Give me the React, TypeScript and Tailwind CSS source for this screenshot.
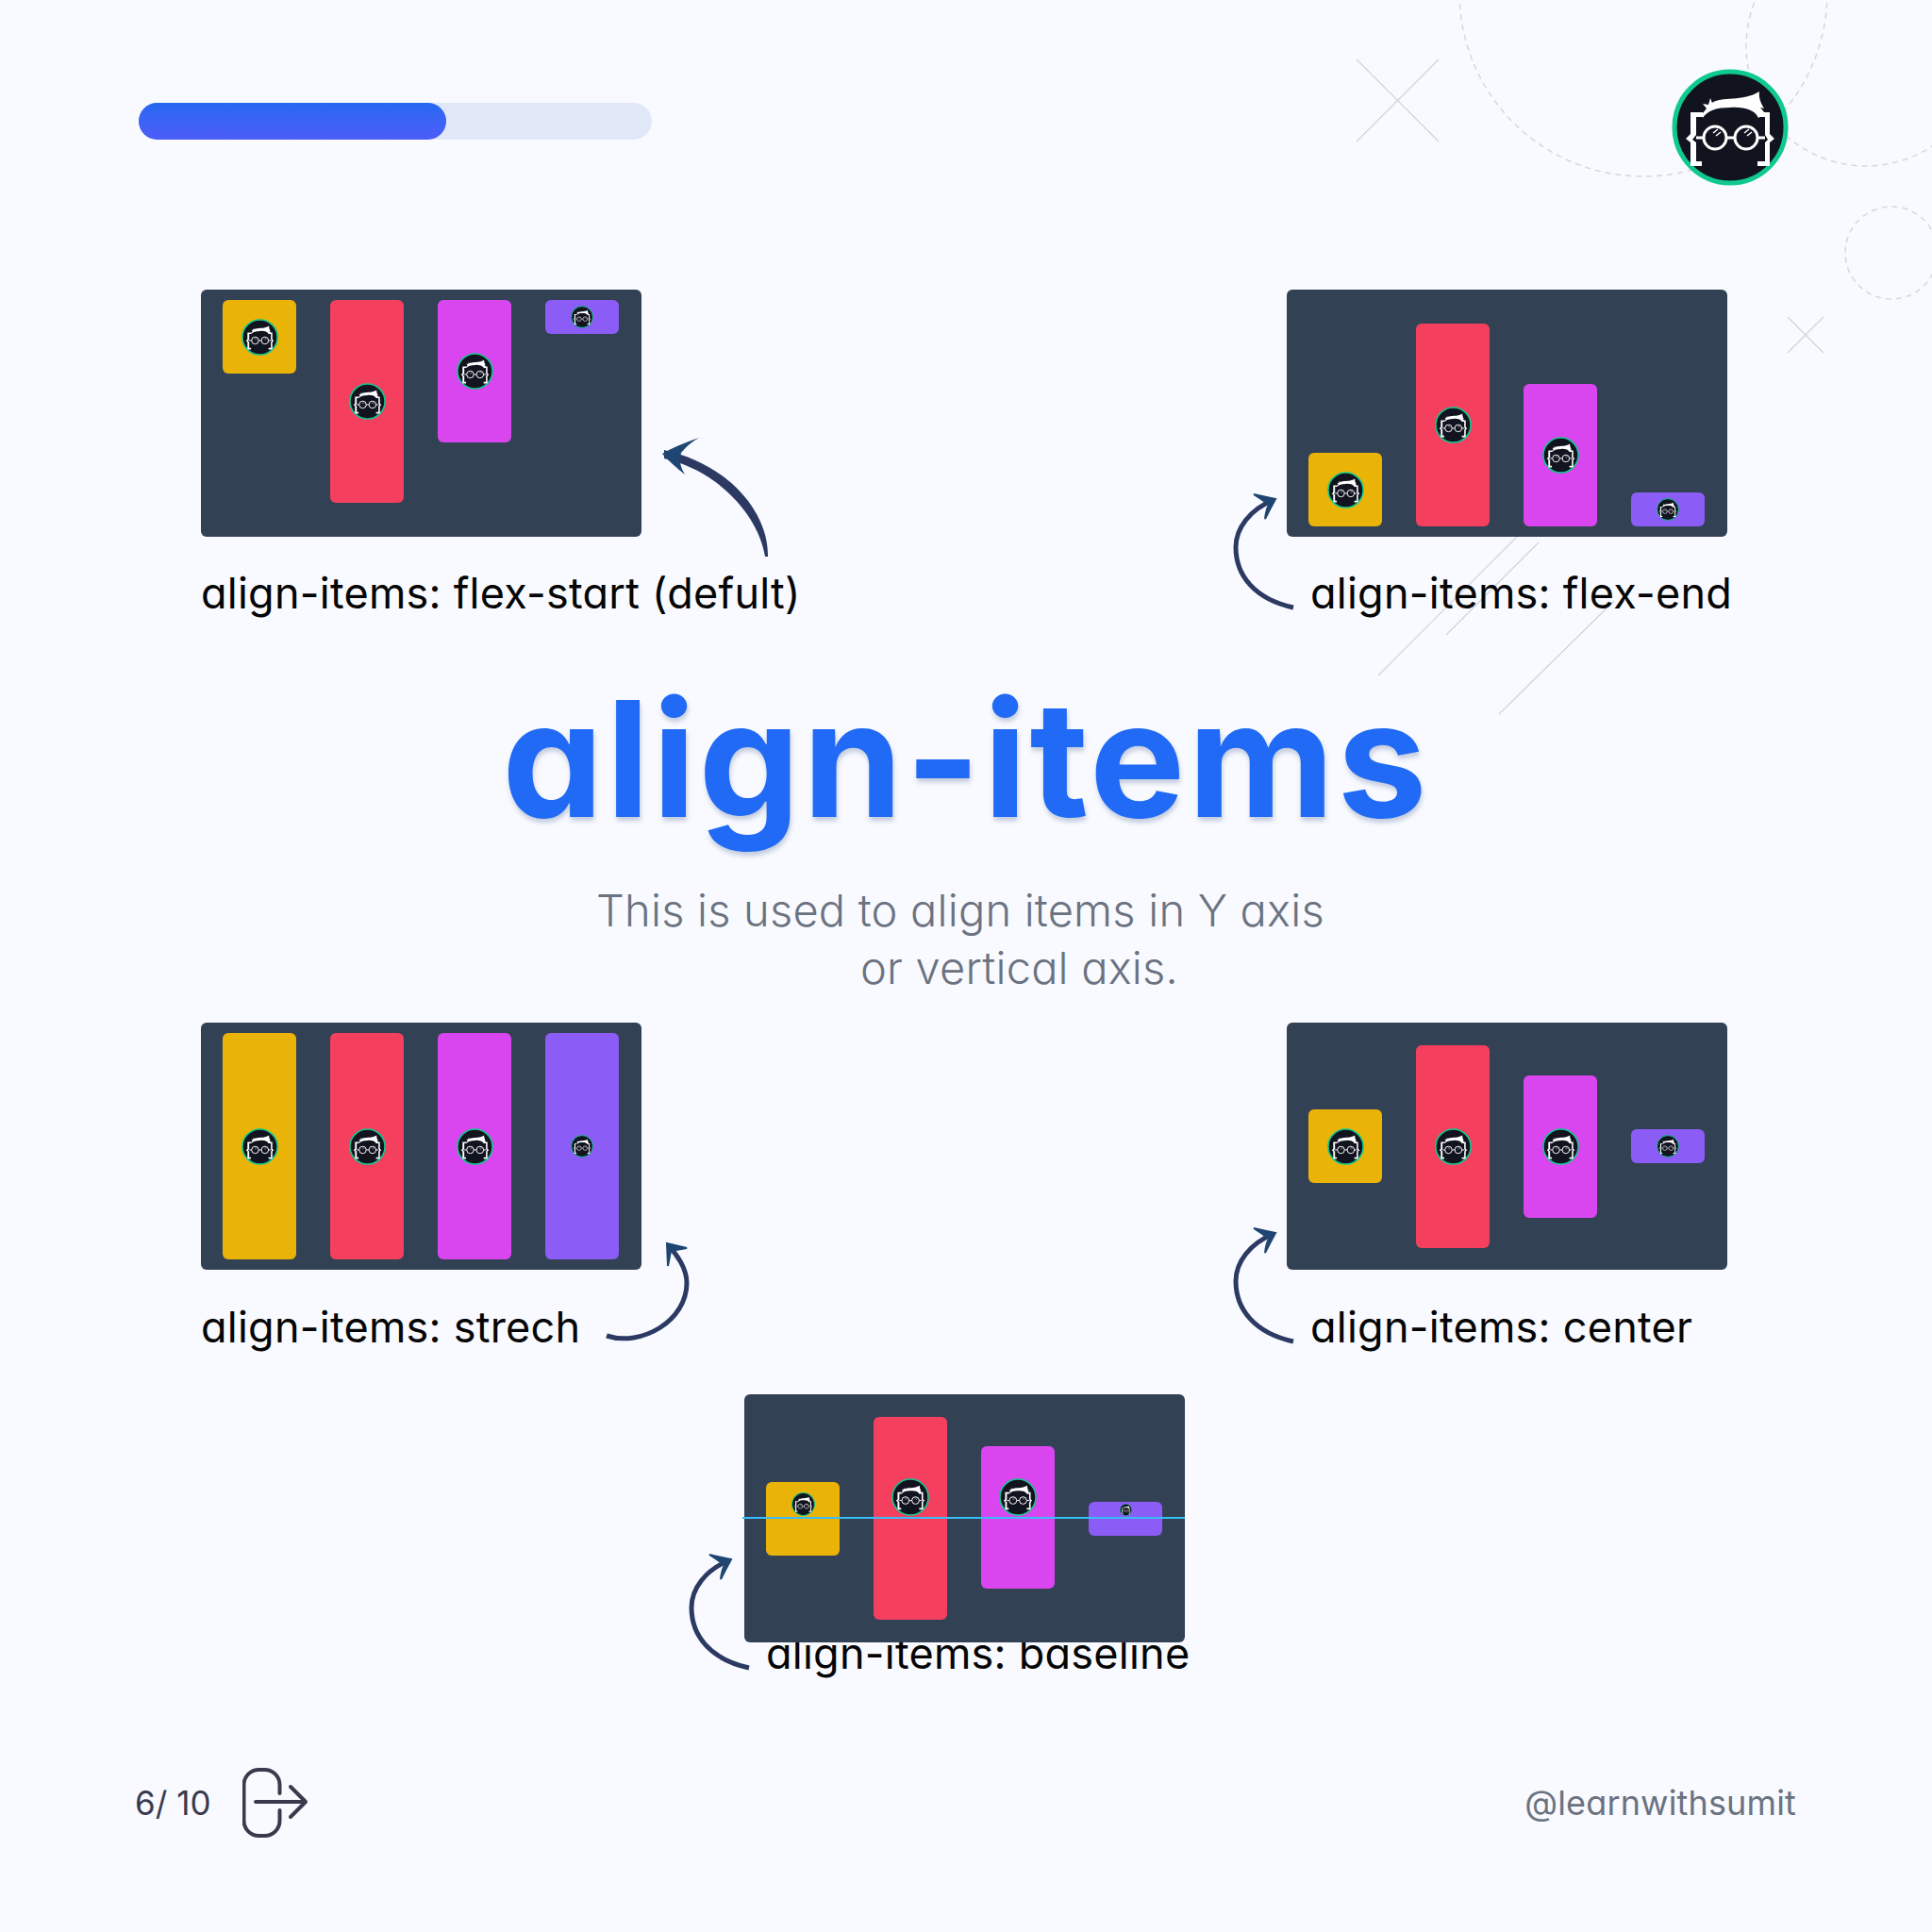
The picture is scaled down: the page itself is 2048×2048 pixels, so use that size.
const BARS = [
  { color: "bg-[#eab308]", height: "h-[78px]", logo: 39 },
  { color: "bg-[#f43f5e]", height: "h-[215px]", logo: 39 },
  { color: "bg-[#d946ef]", height: "h-[151px]", logo: 39 },
  { color: "bg-[#8b5cf6]", height: "h-[36px]", logo: 24 },
]

const BASELINE_BARS = [
  { color: "bg-[#eab308]", height: "h-[78px]", pad: "pt-[11px]", logo: 25 },
  { color: "bg-[#f43f5e]", height: "h-[215px]", pad: "pt-[65px]", logo: 40 },
  { color: "bg-[#d946ef]", height: "h-[151px]", pad: "pt-[34px]", logo: 40 },
  { color: "bg-[#8b5cf6]", height: "h-[36px]", pad: "pt-[2px]", logo: 13 },
]

function Logo({ size, className = "" }: { size: number; className?: string }) {
  return (
    <svg width={size} height={size} viewBox="0 0 124 124" className={className}>
      <circle cx="62" cy="62" r="59" fill="#11131f" stroke="#10c98f" strokeWidth="5" />
      <path
        fill="#fff"
        d="M33 47 L37 42 L33 37 L39 38 L41 31 L43 36 C52 29 76 35 93 24 C92 31 95 37 98 42 L94 41 L99 47 L92 52 C88 43 76 40 62 41 C48 41 38 44 33 52 Z"
      />
      <path
        fill="#fff"
        d="M20 46 H33 V51 H26 V70 L22 75 L26 78 V98 H32 V103 H20 V78 L15 74 L20 69 Z"
      />
      <path
        fill="#fff"
        d="M104 46 H92 V51 H99 V70 L102 75 L99 78 V98 H91 V103 H104 V78 L109 74 L104 69 Z"
      />
      <g fill="none" stroke="#fff" strokeWidth="3">
        <circle cx="46" cy="73" r="12" />
        <circle cx="79" cy="73" r="12" />
        <path d="M58 73 H67 M26 73 H34 M91 73 H99" />
        <path d="M44 68 L49 64 M47 71 L52 67 M77 68 L82 64 M80 71 L85 67" strokeWidth="1.5" />
      </g>
    </svg>
  )
}

function Panel({ align }: { align: string }) {
  return (
    <div className={`relative z-10 flex h-[262px] w-[467px] justify-between rounded-md bg-[#334155] pl-[23px] pr-[24px] py-[11px] ${align}`}>
      {BARS.map((bar) => (
        <div key={bar.color} className={`flex w-[78px] items-center justify-center rounded-md ${bar.color} ${bar.height}`}>
          <Logo size={bar.logo} />
        </div>
      ))}
    </div>
  )
}

function StretchPanel() {
  return (
    <div className="relative z-10 flex h-[262px] w-[467px] items-stretch justify-between rounded-md bg-[#334155] pl-[23px] pr-[24px] py-[11px]">
      {BARS.map((bar) => (
        <div key={bar.color} className={`flex w-[78px] items-center justify-center rounded-md ${bar.color}`}>
          <Logo size={bar.logo} />
        </div>
      ))}
    </div>
  )
}

function BaselinePanel() {
  return (
    <div className="relative z-10 flex h-[263px] w-[467px] flex-nowrap items-center justify-between rounded-md bg-[#334155] pl-[23px] pr-[24px]">
      <div className="flex h-[215px] w-full items-baseline justify-between">
        {BASELINE_BARS.map((bar) => (
          <div key={bar.color} className={`block w-[78px] rounded-md text-center text-[0px] leading-none ${bar.color} ${bar.height} ${bar.pad}`}>
            <Logo size={bar.logo} className="inline-block align-baseline" />
          </div>
        ))}
      </div>
      <div className="absolute -left-[2px] right-0 top-[130px] h-[2px] bg-[#38bdf8]" />
    </div>
  )
}

function Label({ children, className = "" }: { children: string; className?: string }) {
  return (
    <p className={`whitespace-nowrap text-[45px] leading-[60px] tracking-[0.25px] text-[#050505] ${className}`}>{children}</p>
  )
}

// фоновые линии и стрелки
function Decor() {
  const head2 = "M1329 524 Q1342 527 1352 529 Q1346 540 1341 550 Q1342 541 1345 535 Q1337 529 1329 524 Z"
  const curve2 = "M1371 644 C1330 635 1310 610 1310 580 C1310 560 1325 540 1350 530"
  return (
    <svg width="2048" height="2048" viewBox="0 0 2048 2048" className="absolute left-0 top-0" fill="none">
      <g stroke="#d4d7dd" strokeWidth="1.5" strokeDasharray="6 5">
        <circle cx="1742" cy="-8" r="195" />
        <circle cx="1978" cy="49" r="127" />
        <circle cx="2005" cy="268" r="49" />
      </g>
      <g stroke="#d0d3d9" strokeWidth="1.2">
        <path d="M1438 63 L1525 150 M1525 63 L1438 150" />
        <path d="M1895 336 L1933 374 M1933 336 L1895 374" />
        <path d="M1608 569 L1461 716 M1631 575 L1533 673 M1711 637 L1589 757" />
      </g>
      <g stroke="#2c3a63" strokeWidth="5" strokeLinecap="butt">
        <path d={curve2} />
        <path d={curve2} transform="translate(-577 1124)" />
        <path d={curve2} transform="translate(0 778)" />
        <path d="M643 1416 C680 1428 728 1400 728 1360 C728 1345 718 1330 708 1320" />
      </g>
      <path fill="#2c3a63" d="M814 590 C815 545 775 493 704 477 L704 486 C765 500 805 550 811 590 Z" />
      <g fill="#1f4673">
        <path d="M741 464 Q715 473 702 481 Q712 492 726 503 Q718 490 722 480 Q730 470 741 464 Z" />
        <path d={head2} stroke="#1f4673" strokeWidth="2" />
        <path d={head2} stroke="#1f4673" strokeWidth="2" transform="translate(-577 1124)" />
        <path d={head2} stroke="#1f4673" strokeWidth="2" transform="translate(0 778)" />
        <path d="M728 1323 L707 1318 L708 1342 L711 1326 Z" stroke="#1f4673" strokeWidth="2" />
      </g>
    </svg>
  )
}

export default function App() {
  return (
    <div className="relative h-[2048px] w-[2048px] overflow-hidden bg-[#f8faff] font-['Inter',sans-serif] [font-feature-settings:'cv11']">
      <Decor />

      <div className="relative">
        {/* Верхняя полоса */}
        <div className="flex items-start justify-between pl-[147px] pr-[152px] pt-[73px]">
          <div className="mt-[36px] h-[39px] w-[544px] rounded-full bg-[#e0e8f8]">
            <div className="h-full w-[326px] rounded-full bg-gradient-to-b from-[#2469f0] to-[#4c5cf8]" />
          </div>
          <Logo size={124} />
        </div>

        <div className="mt-[110px] flex justify-between pl-[213px] pr-[217px]">
          <div className="w-[467px]">
            <Panel align="items-start" />
            <Label className="mt-[30px]">align-items: flex-start (defult)</Label>
          </div>
          <div className="w-[467px]">
            <Panel align="items-end" />
            <Label className="mt-[30px] pl-[25px]">align-items: flex-end</Label>
          </div>
        </div>

        <h1 className="mt-[50px] text-center text-[170px] font-bold leading-[190px] tracking-[3px] text-[#206af5] [text-shadow:1px_4px_5px_rgba(30,60,120,0.25)]">
          align-items
        </h1>

        <div className="mt-[35px] flex flex-col text-[47px] font-[350] leading-[61px] tracking-[0.2px] text-[#6b7280]">
          <p className="pl-[632px]">This is used to align items in Y axis</p>
          <p className="pl-[912px]">or vertical axis.</p>
        </div>

        <div className="mt-[28px] flex justify-between pl-[213px] pr-[217px]">
          <div className="w-[467px]">
            <StretchPanel />
            <Label className="mt-[31px]">align-items: strech</Label>
          </div>
          <div className="w-[467px]">
            <Panel align="items-center" />
            <Label className="mt-[31px] pl-[25px]">align-items: center</Label>
          </div>
        </div>

        <div className="mt-[41px] pl-[789px]">
          <BaselinePanel />
          <Label className="-mt-[18px] pl-[23px]">align-items: baseline</Label>
        </div>

        {/* Низ страницы */}
        <div className="mt-[91px] flex items-center justify-between pl-[143px] pr-[144px]">
          <div className="flex items-center gap-[34px]">
            <span className="text-[35px] leading-none text-[#3a3a4d]">6/ 10</span>
            <svg width="70" height="74" viewBox="0 0 70 74" fill="none" stroke="#3a3a4d" strokeWidth="4" strokeLinecap="round" strokeLinejoin="round">
              <path d="M39.5 27 V18 A16 16 0 0 0 23.5 2 H17.5 A16 16 0 0 0 1.5 18 V56 A16 16 0 0 0 17.5 72 H23.5 A16 16 0 0 0 39.5 56 V45" />
              <path d="M14 36 H67 M51 20 L67 36 L51 52" />
            </svg>
          </div>
          <span className="text-[36px] leading-none tracking-[0.15px] text-[#6b7280]">@learnwithsumit</span>
        </div>
      </div>
    </div>
  )
}
